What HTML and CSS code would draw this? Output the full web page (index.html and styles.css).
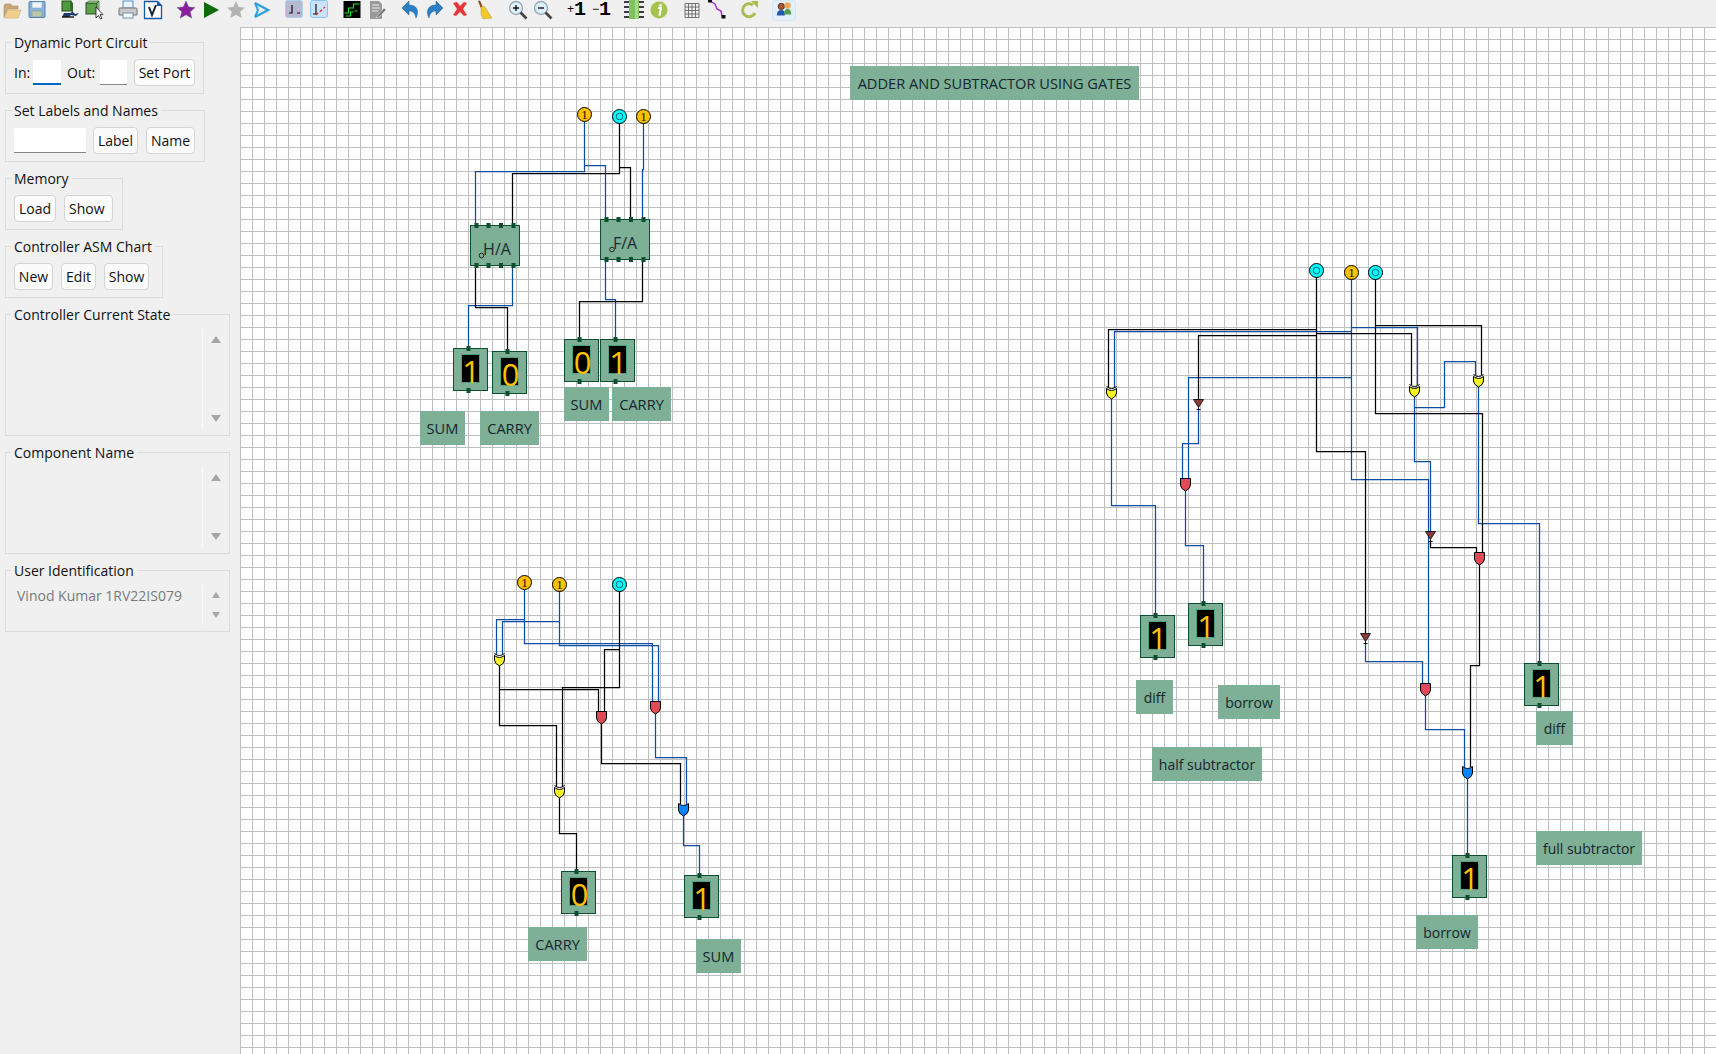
FILE: index.html
```html
<!DOCTYPE html>
<html lang="en">
<head>
<meta charset="utf-8">
<title>Adder and Subtractor Using Gates</title>
<link rel="stylesheet" href="styles.css">
</head>
<body>
<div class="app">
<header class="toolbar">
  <span class="tool"><svg viewBox="0 0 20 20"><path d="M2 17V6l1-2h6l1 2h6v3H6L2 17z" fill="#c9a877" stroke="#a98f68" stroke-width=".6"/><path d="M2 18l4-8h13l-3 8z" fill="#f1cf8c" stroke="#cfae76" stroke-width=".6"/></svg></span>
  <span class="tool"><svg viewBox="0 0 20 20"><rect x="2" y="1.500" width="16" height="16" rx="1" fill="#8db3da" stroke="#4c7fb4"/><rect x="5" y="2" width="10" height="6" fill="#eef3f8" stroke="#7b9cc0" stroke-width=".5"/><rect x="5" y="11" width="10" height="6" fill="#b9c9a8" stroke="#6a8aa8" stroke-width=".5"/></svg></span>
  <span class="tool sep"><svg viewBox="0 0 20 20"><rect x="2" y="1" width="9" height="10" fill="#4e9a3c" stroke="#1e4d1a"/><path d="M11 1l2 2v9l-2-1z" fill="#2d6a24"/><path d="M4 13h7l1-2 3 3 4-1-3 3-5-1-2 2H2z" fill="#1d3b66"/><path d="M2 17h12" stroke="#111" stroke-width="1.400"/></svg></span>
  <span class="tool"><svg viewBox="0 0 20 20"><rect x="1" y="3" width="11" height="11" fill="#5da04a" stroke="#234f1f"/><path d="M1 3l3-2h10l-2 2zM12 3l2-2v11l-2 2z" fill="#a7cf93" stroke="#234f1f" stroke-width=".6"/><path d="M11 7v11l2.500-2.500 2 3.500 1.500-.8-2-3.500 3 0z" fill="#fff" stroke="#111" stroke-width=".8"/></svg></span>
  <span class="tool sep"><svg viewBox="0 0 20 20"><rect x="5" y="1" width="10" height="7" fill="#eaf2fb" stroke="#5b8fc7"/><path d="M2 8h16a1 1 0 0 1 1 1v6H1V9a1 1 0 0 1 1-1z" fill="#c8c8c8" stroke="#777"/><rect x="5" y="13" width="10" height="5" fill="#fff" stroke="#6d90b8"/></svg></span>
  <span class="tool"><svg viewBox="0 0 20 20"><path d="M1.500 1.500h13l4 4v13h-17z" fill="#fff" stroke="#1458a8" stroke-width="1.300"/><path d="M14 1l5 5h-5z" fill="#1458a8"/><path d="M6 7l3 8 4-10" fill="none" stroke="#123" stroke-width="2"/></svg></span>
  <span class="tool sep"><svg viewBox="0 0 20 20"><path d="M10 1l2.700 6 6.300.6-4.800 4.200 1.500 6.300L10 14.800 4.300 18.100l1.500-6.300L1 7.600 7.300 7z" fill="#8c1fa0" stroke="#61607a" stroke-width=".5"/></svg></span>
  <span class="tool"><svg viewBox="0 0 20 20"><path d="M3 2l15 8-15 8z" fill="#0b6b0b"/></svg></span>
  <span class="tool"><svg viewBox="0 0 20 20"><path d="M10 1l2.700 6 6.300.6-4.800 4.200 1.500 6.300L10 14.800 4.300 18.100l1.500-6.300L1 7.600 7.300 7z" fill="#b4b4b4"/></svg></span>
  <span class="tool"><svg viewBox="0 0 20 20"><path d="M4 3l13 7-13 7" fill="none" stroke="#2fa4d8" stroke-width="2.400"/><path d="M4 3l3 7-3 7" fill="none" stroke="#2fa4d8" stroke-width="2"/></svg></span>
  <span class="tool sep"><svg viewBox="0 0 20 20"><rect x="1.500" y=".5" width="17" height="17" rx="2" fill="#b8b8d0" stroke="#a9d2f2"/><path d="M8 5v8H5M13 13h3" fill="none" stroke="#111" stroke-width="1.200"/></svg></span>
  <span class="tool"><svg viewBox="0 0 20 20"><rect x="1.500" y=".5" width="17" height="17" rx="2" fill="#c9e2f8" stroke="#8cc4f0"/><path d="M7 4v10H4" fill="none" stroke="#111" stroke-width="1.200"/><path d="M7 15l9-8" fill="none" stroke="#d22" stroke-width="1.200" stroke-dasharray="3 2"/></svg></span>
  <span class="tool sep"><svg viewBox="0 0 20 20"><rect x="1.500" y="1" width="17" height="17" fill="#000"/><path d="M2.500 13h4V8h5V4h6M3.500 16h5v-4h3M12.500 11h3" fill="none" stroke="#22e022" stroke-width="1.200"/></svg></span>
  <span class="tool"><svg viewBox="0 0 20 20"><path d="M3 1h9l3 3v15H3z" fill="#9a9a9a"/><path d="M5 5h7M5 8h8M5 11h6" stroke="#eee"/><path d="M10 16l7-8 2 2-7 7-3 1z" fill="#777" stroke="#eee" stroke-width=".5"/></svg></span>
  <span class="tool sep"><svg viewBox="0 0 20 20"><path d="M9 1L2 8l7 7v-4c4 0 6 2 7 7 3-6 2-13-7-13z" fill="#2d7fc4" stroke="#1d5d96" stroke-width=".5"/></svg></span>
  <span class="tool"><svg viewBox="0 0 20 20"><path d="M11 1l7 7-7 7v-4c-4 0-6 2-7 7-3-6-2-13 7-13z" fill="#2d7fc4" stroke="#1d5d96" stroke-width=".5"/></svg></span>
  <span class="tool"><svg viewBox="0 0 20 20"><path d="M3 3l4-1 3 4 4-4 3 1-4 6 4 6-3 1-4-4-4 4-3-1 4-6z" fill="#e8353a"/></svg></span>
  <span class="tool"><svg viewBox="0 0 20 20"><path d="M3 1l2-.5 3 7-2 1z" fill="#8a4a20"/><path d="M6 7l3-1 6 9 2 3-9 1-2-5z" fill="#f0c92c" stroke="#b89a20" stroke-width=".5"/></svg></span>
  <span class="tool sep"><svg viewBox="0 0 20 20"><circle cx="8" cy="8" r="6.500" fill="#dff0fa" stroke="#9ab" stroke-width="1.400"/><path d="M12.500 12.500l6 6" stroke="#444" stroke-width="2.600"/><path d="M5 8h6M8 5v6" stroke="#111" stroke-width="1.400"/></svg></span>
  <span class="tool"><svg viewBox="0 0 20 20"><circle cx="8" cy="8" r="6.500" fill="#dff0fa" stroke="#9ab" stroke-width="1.400"/><path d="M12.500 12.500l6 6" stroke="#444" stroke-width="2.600"/><path d="M5 8h6" stroke="#111" stroke-width="1.400"/></svg></span>
  <span class="tool sep step"><small>+</small>1</span>
  <span class="tool step"><small>−</small>1</span>
  <span class="tool sep"><svg viewBox="0 0 20 20"><rect x="5" y="0" width="10" height="19" fill="#7fc35c"/><rect x="11" y="0" width="3" height="19" fill="#a5d98c"/><path d="M0 2h5M0 7h5M0 12h5M0 17h5M15 2h5M15 7h5M15 12h5M15 17h5" stroke="#000" stroke-width="1.400"/></svg></span>
  <span class="tool"><svg viewBox="0 0 20 20"><circle cx="10" cy="10" r="8.500" fill="#a6c44c"/><path d="M9 8h3l-1.500 6.500H12" fill="none" stroke="#fff" stroke-width="2"/><circle cx="11.500" cy="5.500" r="1.400" fill="#fff"/></svg></span>
  <span class="tool sep"><svg viewBox="0 0 20 20"><path d="M3 3.500h14v14H3zM3 7h14M3 10.500h14M3 14h14M6.500 3.500v14M10 3.500v14M13.500 3.500v14" fill="none" stroke="#666" stroke-width=".9"/></svg></span>
  <span class="tool"><svg viewBox="0 0 20 20"><path d="M3 1l5 3 2 5 4 2 1 5 2 1" fill="none" stroke="#a32fd6" stroke-width="1.400"/><rect x="1" y="0" width="4" height="2.500" fill="#111"/><rect x="14.500" y="15" width="4" height="3.500" fill="#111"/></svg></span>
  <span class="tool sep"><svg viewBox="0 0 20 20"><path d="M15 13a6.500 6.500 0 1 1-2-8" fill="none" stroke="#a9bd52" stroke-width="3"/><path d="M11 1h7v7z" fill="#a9bd52"/></svg></span>
  <span class="tool people"><svg viewBox="0 0 20 20"><circle cx="7" cy="6" r="3.500" fill="#b5562a" stroke="#222" stroke-width=".8"/><path d="M2 16c0-4 2-6 5-6s4 2 4 6z" fill="#2557b0"/><circle cx="14" cy="5" r="3.500" fill="#eaa95b"/><path d="M10 15c0-4 1.500-6 4-6s4 2 4 6z" fill="#4f9e4a"/></svg></span>
</header>
<div class="workspace">
  <aside class="sidebar">
    <fieldset class="group w-199">
      <legend>Dynamic Port Circuit</legend>
      <div class="row">
        <label class="lab-in">In:</label>
        <input class="field w-28 focused" type="text">
        <label class="lab-out">Out:</label>
        <input class="field w-27" type="text">
        <button class="btn b-60 push" type="button">Set Port</button>
      </div>
    </fieldset>
    <fieldset class="group w-200">
      <legend>Set Labels and Names</legend>
      <div class="row">
        <input class="field w-72" type="text">
        <button class="btn b-45 gap7" type="button">Label</button>
        <button class="btn b-49 gap8" type="button">Name</button>
      </div>
    </fieldset>
    <fieldset class="group w-118">
      <legend>Memory</legend>
      <div class="row">
        <button class="btn b-42" type="button">Load</button>
        <button class="btn b-49 gap8 left" type="button">Show</button>
      </div>
    </fieldset>
    <fieldset class="group w-158">
      <legend>Controller ASM Chart</legend>
      <div class="row">
        <button class="btn b-39" type="button">New</button>
        <button class="btn b-35 gap8" type="button">Edit</button>
        <button class="btn b-45 gap8" type="button">Show</button>
      </div>
    </fieldset>
    <fieldset class="group wide h-132">
      <legend>Controller Current State</legend>
      <div class="scrollbox sb-100">
        <div class="scrollbar"><span class="up"></span><span class="down"></span></div>
      </div>
    </fieldset>
    <fieldset class="group wide h-112">
      <legend>Component Name</legend>
      <div class="scrollbox sb-80">
        <div class="scrollbar"><span class="up"></span><span class="down"></span></div>
      </div>
    </fieldset>
    <fieldset class="group wide h-72">
      <legend>User Identification</legend>
      <div class="scrollbox sb-40">
        <span class="user">Vinod Kumar 1RV22IS079</span>
        <div class="scrollbar tight"><span class="up small-arrow"></span><span class="down small-arrow"></span></div>
      </div>
    </fieldset>
  </aside>
  <main class="canvas">
    <svg class="circuit" viewBox="240 27 1476 1027" width="1476" height="1027">
      <defs>
        <g id="and"><path d="M-5 0H5V6.500Q5 10 0 12.500Q-5 10-5 6.500Z" fill="#e04a56" stroke="#000"/></g>
        <g id="or"><path d="M-5 0Q0 4 5 0V6.500Q5 10 0 12.500Q-5 10-5 6.500Z" fill="#0a84ff" stroke="#000"/></g>
        <g id="xor"><path d="M-5 0Q0 4 5 0" fill="none" stroke="#000"/><path d="M-5 2Q0 6 5 2V6.500Q5 10 0 12.500Q-5 10-5 6.500Z" fill="#f2f224" stroke="#000"/></g>
        <g id="not"><path d="M-5 0H5L0 8Z" fill="#8c3a3a" stroke="#000" stroke-width=".8"/><path d="M0 8V10M-2 10H2" stroke="#000" fill="none"/></g>
        <g id="one"><circle r="7" fill="#ffc000" stroke="#000"/></g>
        <g id="zero"><circle r="7" fill="#00ffff" stroke="#000"/><circle r="3.300" fill="none" stroke="#08676b"/></g>
        <g id="disp">
          <rect x=".5" y=".5" width="34" height="42" fill="#7db096" stroke="#0b4f30"/>
          <rect x="8.500" y="6.500" width="18" height="28" fill="#000" stroke="#4fa07f"/>
          <rect x="13.500" y="-2" width="4" height="5" fill="#0b4f30"/>
          <rect x="13.500" y="40" width="4" height="5" fill="#0b4f30"/>
        </g>
        <g id="chip">
          <rect x=".5" y=".5" width="49" height="40" fill="#7db096" stroke="#0b4f30"/>
          <path d="M4.500-2h4v5h-4zM16.500-2h4v5h-4zM29-2h4v5h-4zM41.500-2h4v5h-4zM4.500 38h4v5h-4zM16.500 38h4v5h-4zM29 38h4v5h-4zM41.500 38h4v5h-4z" fill="#0b4f30"/>
        </g>
      </defs>

      <g class="wire-blue">
        <path d="M584.500 121V171.500H475.500V225"/>
        <path d="M584.500 165.500H605.500V218"/>
        <path d="M643.500 123V169.500H642.500V218"/>
        <path d="M512.500 265V305.500H468.500V347"/>
        <path d="M605.500 260V299.500H615.500V338"/>
        <path d="M524.500 590V643.500H652.500V702"/>
        <path d="M524.500 619.500H496.500V654"/>
        <path d="M559.500 591V645.500H658.500V702"/>
        <path d="M559.500 621.500H502.500V654"/>
        <path d="M655.500 714V757.500H686.500V804"/>
        <path d="M683.500 816V845.500H699.500V875"/>
        <path d="M1351.500 279V479.500H1428.500V683"/>
        <path d="M1351.500 331.500H1114.500V388"/>
        <path d="M1351.500 377.500H1188.500V478"/>
        <path d="M1351.500 327.500H1417.500V385"/>
        <path d="M1111.500 399V505.500H1155.500V613"/>
        <path d="M1198.500 409V443.500H1182.500V478"/>
        <path d="M1185.500 490V545.500H1203.500V602"/>
        <path d="M1414.500 397V461.500H1430.500V532"/>
        <path d="M1414.500 407.500H1444.500V361.500H1475.500V375"/>
        <path d="M1478.500 387V523.500H1539.500V662"/>
        <path d="M1365.500 644V661.500H1422.500V683"/>
        <path d="M1425.500 696V729.500H1464.500V767"/>
        <path d="M1467.500 779V853"/>
      </g>
      <g class="wire-black">
        <path d="M619.500 123V173.500H512.500V225"/>
        <path d="M619.500 167.500H630.500V218"/>
        <path d="M475.500 265V307.500H507.500V350"/>
        <path d="M642.500 260V301.500H579.500V338"/>
        <path d="M619.500 591V687.500H562.500V787"/>
        <path d="M619.500 649.500H604.500V712"/>
        <path d="M499.500 665V725.500H556.500V787"/>
        <path d="M499.500 689.500H598.500V712"/>
        <path d="M601.500 724V763.500H680.500V804"/>
        <path d="M559.500 797V833.500H576.500V870"/>
        <path d="M1316.500 277V451.500H1365.500V633"/>
        <path d="M1316.500 329.500H1108.500V388"/>
        <path d="M1316.500 335.500H1198.500V399"/>
        <path d="M1316.500 333.500H1411.500V385"/>
        <path d="M1375.500 279V413.500H1482.500V552"/>
        <path d="M1375.500 325.500H1481.500V375"/>
        <path d="M1430.500 541V547.500H1476.500V552"/>
        <path d="M1479.500 564V665.500H1470.500V767"/>
      </g>

      <use href="#one" x="584.500" y="114.500"/><text class="bit" x="584.500" y="119">1</text>
      <use href="#zero" x="619.500" y="116.500"/>
      <use href="#one" x="643.500" y="116.500"/><text class="bit" x="643.500" y="121">1</text>
      <use href="#one" x="524.500" y="582.500"/><text class="bit" x="524.500" y="587">1</text>
      <use href="#one" x="559.500" y="584.500"/><text class="bit" x="559.500" y="589">1</text>
      <use href="#zero" x="619.500" y="584.500"/>
      <use href="#zero" x="1316.500" y="270.500"/>
      <use href="#one" x="1351.500" y="272.500"/><text class="bit" x="1351.500" y="277">1</text>
      <use href="#zero" x="1375.500" y="272.500"/>

      <use href="#chip" x="470" y="225"/>
      <circle class="dot" cx="481.500" cy="255.500" r="2.300"/>
      <text class="chip-text" x="497" y="255">H/A</text>
      <use href="#chip" x="600" y="219"/>
      <circle class="dot" cx="612" cy="249.500" r="2.300"/>
      <text class="chip-text" x="625" y="249">F/A</text>

      <use href="#xor" x="499.500" y="653.500"/>
      <use href="#and" x="601.500" y="711.500"/>
      <use href="#and" x="655.500" y="701.500"/>
      <use href="#xor" x="559.500" y="785.500"/>
      <use href="#or" x="683.500" y="803.500"/>
      <use href="#xor" x="1111.500" y="386.500"/>
      <use href="#not" x="1198.500" y="399.500"/>
      <use href="#and" x="1185.500" y="478.500"/>
      <use href="#xor" x="1414.500" y="384.500"/>
      <use href="#xor" x="1478.500" y="374.500"/>
      <use href="#not" x="1430.500" y="531.500"/>
      <use href="#and" x="1479.500" y="552.500"/>
      <use href="#not" x="1365.500" y="633.500"/>
      <use href="#and" x="1425.500" y="683.500"/>
      <use href="#or" x="1467.500" y="766.500"/>

      <use href="#disp" x="453" y="348"/><text class="digit" x="471" y="383">1</text>
      <use href="#disp" x="492" y="351"/><text class="digit" x="510.500" y="386">0</text>
      <use href="#disp" x="564" y="339"/><text class="digit" x="582.500" y="374">0</text>
      <use href="#disp" x="600" y="339"/><text class="digit" x="618" y="374">1</text>
      <use href="#disp" x="561" y="871"/><text class="digit" x="579.500" y="906">0</text>
      <use href="#disp" x="684" y="875"/><text class="digit" x="702" y="910">1</text>
      <use href="#disp" x="1140" y="615"/><text class="digit" x="1158" y="650">1</text>
      <use href="#disp" x="1188" y="603"/><text class="digit" x="1206" y="638">1</text>
      <use href="#disp" x="1452" y="855"/><text class="digit" x="1470" y="890">1</text>
      <use href="#disp" x="1524" y="663"/><text class="digit" x="1542" y="698">1</text>

      <rect class="tag" x="850" y="66" width="289" height="34"/><text class="tag-text caps" x="994.500" y="89">ADDER AND SUBTRACTOR USING GATES</text>
      <rect class="tag" x="420" y="411" width="45" height="34"/><text class="tag-text caps" x="442.500" y="434">SUM</text>
      <rect class="tag" x="480" y="411" width="59" height="34"/><text class="tag-text caps" x="509.500" y="434">CARRY</text>
      <rect class="tag" x="564" y="387" width="45" height="34"/><text class="tag-text caps" x="586.500" y="410">SUM</text>
      <rect class="tag" x="612" y="387" width="59" height="34"/><text class="tag-text caps" x="641.500" y="410">CARRY</text>
      <rect class="tag" x="528" y="927" width="59" height="34"/><text class="tag-text caps" x="557.500" y="950">CARRY</text>
      <rect class="tag" x="696" y="939" width="45" height="34"/><text class="tag-text caps" x="718.500" y="962">SUM</text>
      <rect class="tag" x="1136" y="680" width="37" height="34"/><text class="tag-text" x="1154.500" y="703">diff</text>
      <rect class="tag" x="1218" y="685" width="62" height="34"/><text class="tag-text" x="1249" y="708">borrow</text>
      <rect class="tag" x="1152" y="747" width="110" height="34"/><text class="tag-text" x="1207" y="770">half subtractor</text>
      <rect class="tag" x="1536" y="711" width="37" height="34"/><text class="tag-text" x="1554.500" y="734">diff</text>
      <rect class="tag" x="1536" y="831" width="106" height="34"/><text class="tag-text" x="1589" y="854">full subtractor</text>
      <rect class="tag" x="1416" y="915" width="62" height="34"/><text class="tag-text" x="1447" y="938">borrow</text>
    </svg>
  </main>
</div>
</div>
</body>
</html>
```
FILE: styles.css
```css
* { box-sizing: border-box; }
html, body { margin: 0; height: 100%; overflow: hidden; }
body {
  background: #f0f0f0;
  color: #111;
  font-family: "Open Sans", "Noto Sans", sans-serif;
  font-size: 14px;
}
.app { display: flex; flex-direction: column; height: 100vh; }

/* toolbar */
.toolbar { display: flex; align-items: flex-start; height: 27px; flex: none; margin-left: -1px; }
.tool { display: flex; justify-content: center; width: 25px; height: 20px; flex: none; }
.tool svg { width: 20px; height: 20px; }
.sep { margin-left: 8px; }
.step { align-items: center; font: 700 20px/20px "Liberation Mono", monospace; letter-spacing: -2px; color: #000; }
.step small { font-size: 12px; font-weight: 400; margin-right: 2px; }
.people { margin-left: 10px; width: 24px; height: 21px; background: #e3f0fb; border: 1px solid #d5e8f8; border-radius: 3px; }
.people svg { width: 18px; height: 18px; }

/* sidebar */
.workspace { display: flex; flex: 1; min-height: 0; }
.sidebar {
  width: 240px;
  flex: none;
  display: flex;
  flex-direction: column;
  align-items: flex-start;
  gap: 6px;
  padding: 5px 0 0 5px;
}
.group {
  margin: 0;
  min-width: 0;
  height: 62px;
  padding: 0 8px;
  border: 1px solid #dcdcdc;
}
.group legend {
  padding: 0 3px;
  margin-left: -3px;
  height: 20px;
  line-height: 22px;
  font-size: 14px;
  white-space: nowrap;
}
.w-199 { width: 199px; }
.w-200 { width: 200px; }
.w-118 { width: 118px; }
.w-158 { width: 158px; }
.wide { width: 225px; }
.h-132 { height: 132px; }
.h-112 { height: 112px; }
.h-72 { height: 72px; }

.row { display: flex; align-items: center; height: 27px; margin-top: 7px; }
.lab-in { width: 19px; }
.lab-out { width: 33px; margin-left: 6px; }
.field {
  height: 25px;
  padding: 0;
  border: 0;
  border-bottom: 1px solid #868686;
  border-radius: 2px 2px 0 0;
  background: #fff;
  outline: 0;
}
.focused { border-bottom: 2px solid #0067c0; }
.w-28 { width: 28px; }
.w-27 { width: 27px; }
.w-72 { width: 72px; }
.btn {
  height: 27px;
  padding: 0;
  border: 1px solid #d4d4d4;
  border-radius: 4px;
  background: #fbfbfb;
  color: #111;
  font: inherit;
}
.left { text-align: left; padding-left: 4px; }
.b-60 { width: 61px; }
.b-45 { width: 45px; }
.b-49 { width: 49px; }
.b-42 { width: 42px; }
.b-39 { width: 39px; }
.b-35 { width: 35px; }
.push { margin-left: 7px; }
.gap7 { margin-left: 7px; }
.gap8 { margin-left: 8px; }

.scrollbox { position: relative; display: flex; margin-right: -8px; }
.sb-100 { height: 100px; margin-top: 5px; }
.sb-80 { height: 80px; margin-top: 5px; }
.sb-40 { height: 40px; margin-top: 5px; }
.user { color: #7a7a7a; padding: 1px 0 0 3px; line-height: 20px; white-space: nowrap; }
.scrollbar {
  position: absolute;
  top: 0;
  right: 0;
  bottom: 0;
  width: 27px;
  border-left: 1px solid #fafafa;
  display: flex;
  flex-direction: column;
  align-items: center;
  justify-content: space-between;
  padding: 7px 0;
}
.tight { padding: 7px 0 7px; justify-content: space-between; }
.up, .down { width: 0; height: 0; border-left: 5px solid transparent; border-right: 5px solid transparent; }
.up { border-bottom: 7px solid #a6a6a6; }
.down { border-top: 7px solid #a6a6a6; }
.small-arrow { border-left-width: 4px; border-right-width: 4px; }
.up.small-arrow { border-bottom-width: 6px; }
.down.small-arrow { border-top-width: 6px; }

/* canvas */
.canvas {
  position: relative;
  flex: 1;
  background-color: #fff;
  background-image:
    linear-gradient(to right, #bebebe 1px, transparent 1px),
    linear-gradient(to bottom, #bebebe 1px, transparent 1px);
  background-size: 12px 12px;
  overflow: hidden;
}
.circuit { display: block; }
.wire-blue path, .wire-black path { fill: none; stroke-width: 1.25; }
.wire-blue path { stroke: #0b4da2; }
.wire-black path { stroke: #000; }
.bit { font: 13px "Liberation Serif", serif; text-anchor: middle; fill: #111; }
.digit { font: 400 31px "Open Sans", sans-serif; text-anchor: middle; fill: #ffc000; }
.dot { fill: none; stroke: #222; }
.chip-text { font-size: 16px; text-anchor: middle; fill: #1b2b33; }
.tag { fill: #7db096; }
.tag-text { font-size: 14px; text-anchor: middle; fill: #16262e; }
.tag-text.caps { font-size: 14.6px; }
```
